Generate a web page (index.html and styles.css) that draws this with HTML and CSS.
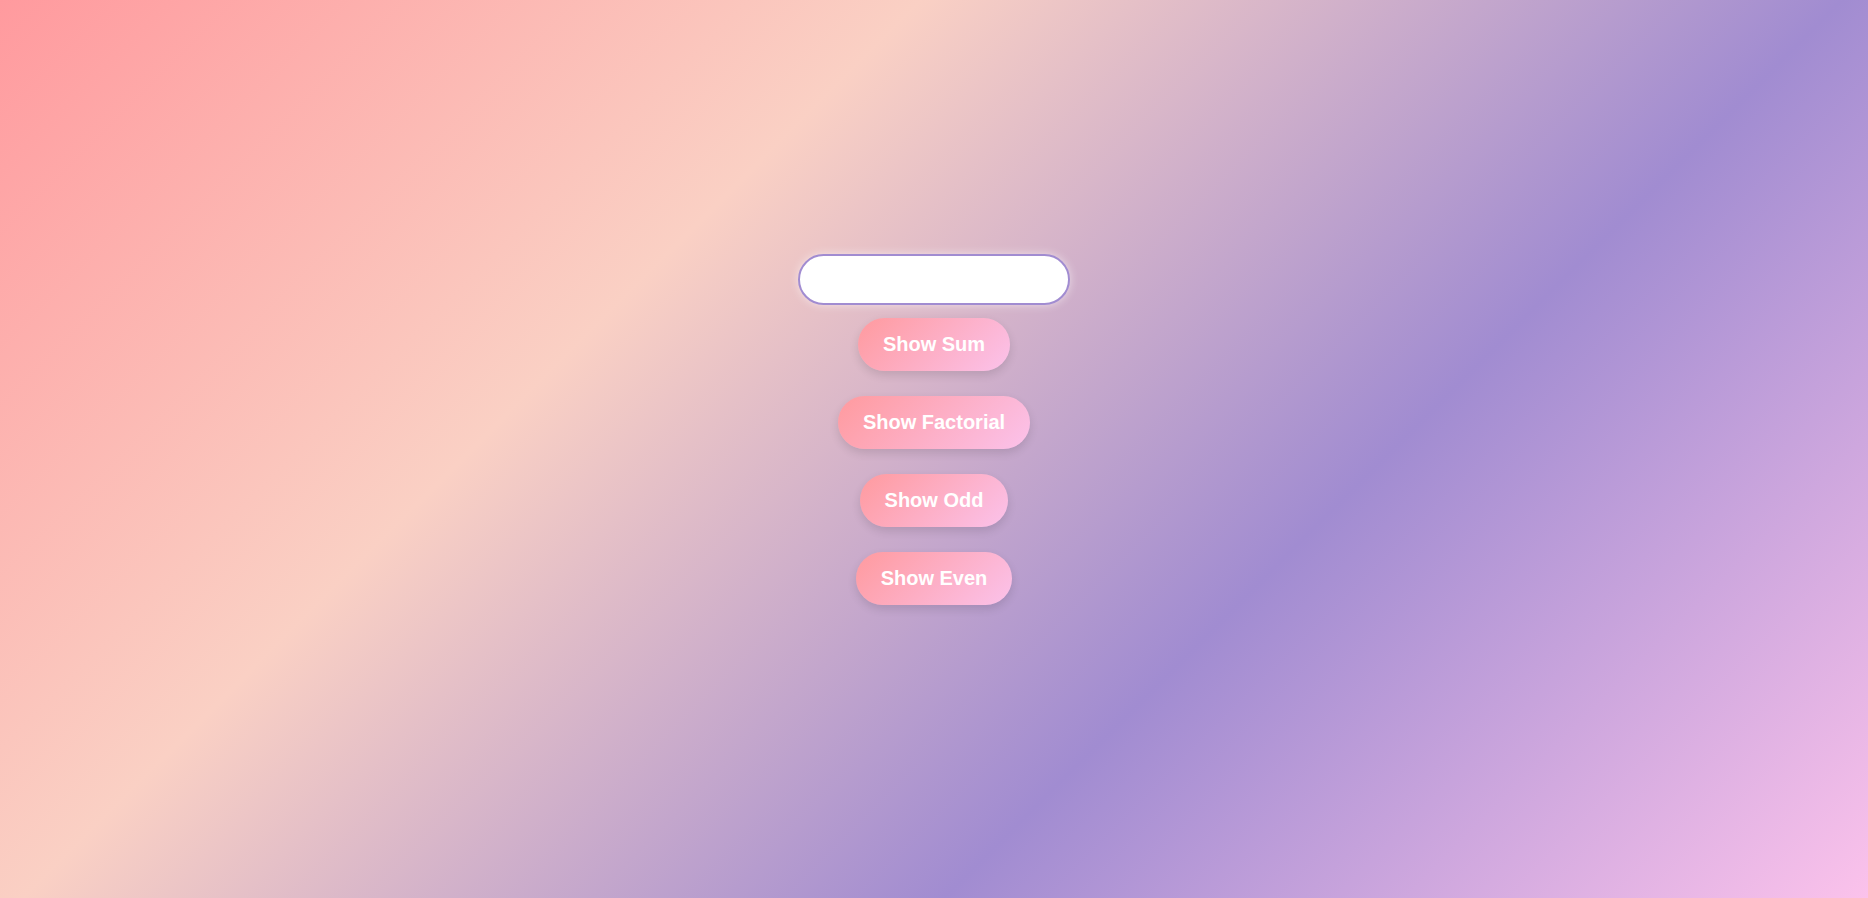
FILE: index.html
```html
<!DOCTYPE html>
<html lang="en">
<head>
<meta charset="utf-8">
<title>Numbers</title>
<link rel="stylesheet" href="styles.css">
</head>
<body>
<main class="app">
  <input class="number-input" type="text" aria-label="Number">
  <div class="actions">
    <button class="btn">Show Sum</button>
    <button class="btn">Show Factorial</button>
    <button class="btn">Show Odd</button>
    <button class="btn">Show Even</button>
  </div>
</main>
</body>
</html>
```

FILE: styles.css
```css
html, body {
  margin: 0;
  padding: 0;
}

body {
  min-height: 100vh;
  background: linear-gradient(135deg, #ff9a9e 0%, #fad0c4 33.3%, #a18cd1 66.6%, #fbc2eb 100%);
  font-family: "Liberation Sans", Arial, sans-serif;
}

.app {
  display: flex;
  flex-direction: column;
  align-items: center;
  padding-top: 254px;
}

.number-input {
  box-sizing: border-box;
  width: 272px;
  height: 51px;
  padding: 0 20px;
  border: 2px solid #a18cd1;
  border-radius: 26px;
  background: #fff;
  font-family: inherit;
  font-size: 18px;
  outline: none;
  box-shadow: 0 0 10px rgba(255, 255, 255, 0.55);
}

.actions {
  display: flex;
  flex-direction: column;
  align-items: center;
  gap: 25px;
  margin-top: 13px;
}

.btn {
  box-sizing: border-box;
  height: 53px;
  padding: 15px 25px;
  border: none;
  border-radius: 27px;
  background: linear-gradient(135deg, #ff9a9e 0%, #fbc2eb 100%);
  color: #fff;
  font-family: inherit;
  font-size: 20px;
  font-weight: bold;
  line-height: 23px;
  box-shadow: 0 4px 10px rgba(0, 0, 0, 0.12);
  cursor: pointer;
}
```
